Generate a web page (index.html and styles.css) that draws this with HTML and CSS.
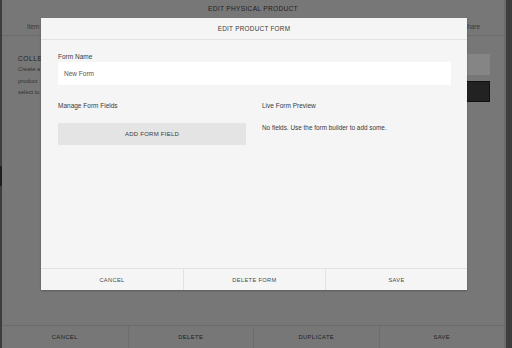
FILE: index.html
```html
<!DOCTYPE html>
<html>
<head>
<meta charset="utf-8">
<link rel="stylesheet" href="styles.css">
</head>
<body>
<div class="page">
  <div class="bg">
    <div class="bg-title">EDIT PHYSICAL PRODUCT</div>
    <div class="bg-tabs"><span>Item</span><span>Share</span></div>
    <div class="bg-content">
      <div class="bg-left">
        <div class="bg-heading">COLLECT</div>
        <p class="bg-text">Create a<br>product<br>select to</p>
      </div>
      <div class="bg-right">
        <div class="bg-box light"></div>
        <div class="bg-box dark"></div>
      </div>
    </div>
    <div class="bg-footer">
      <div class="bg-btn">CANCEL</div>
      <div class="bg-btn">DELETE</div>
      <div class="bg-btn">DUPLICATE</div>
      <div class="bg-btn">SAVE</div>
    </div>
  </div>
  <div class="edge-marks"></div>

  <div class="modal">
    <div class="modal-header">EDIT PRODUCT FORM</div>
    <div class="modal-body">
      <div class="field-label">Form Name</div>
      <div class="input">New Form</div>
      <div class="columns">
        <div class="col">
          <div class="col-title">Manage Form Fields</div>
          <div class="add-btn">ADD FORM FIELD</div>
        </div>
        <div class="col">
          <div class="col-title">Live Form Preview</div>
          <div class="empty">No fields. Use the form builder to add some.</div>
        </div>
      </div>
    </div>
    <div class="modal-footer">
      <div class="foot-btn">CANCEL</div>
      <div class="foot-btn">DELETE FORM</div>
      <div class="foot-btn">SAVE</div>
    </div>
  </div>
</div>
</body>
</html>
```

FILE: styles.css
```css
* { box-sizing: border-box; margin: 0; padding: 0; }
html, body { width: 512px; height: 348px; overflow: hidden; }
body {
  font-family: "Liberation Sans", Arial, sans-serif;
  background: #3d3d3d;
  color: #3a3a3a;
}
.page {
  position: relative;
  width: 512px;
  height: 348px;
  padding-left: 2px;
  padding-right: 6px;
}
.bg {
  height: 348px;
  background: #777;
  border-right: 2px solid #6c6c6c;
  display: flex;
  flex-direction: column;
  color: #2c2c2c;
}
.bg-title {
  height: 17px;
  line-height: 18px;
  text-align: center;
  font-size: 6.6px;
  letter-spacing: 0.3px;
  color: #222;
}
.bg-tabs {
  height: 19px;
  border-bottom: 1px solid #6c6c6c;
  display: flex;
  justify-content: space-between;
  align-items: center;
  padding: 0 24px 0 25px;
  font-size: 6.4px;
  color: #3a3a3a;
}
.bg-content {
  flex: 1;
  display: flex;
  justify-content: space-between;
  padding: 18px 14px 0 16px;
}
.bg-heading {
  font-size: 6.6px;
  letter-spacing: 0.6px;
  color: #1e1e1e;
  margin-top: 1px;
}
.bg-text {
  font-size: 5.8px;
  line-height: 11.5px;
  margin-top: 2px;
  color: #333;
}
.bg-right {
  display: flex;
  flex-direction: column;
  gap: 6px;
  width: 60px;
}
.bg-box { height: 21px; }
.bg-box.light { background: #858585; }
.bg-box.dark { background: #222; border: 1px solid #111; }
.bg-footer {
  height: 23px;
  border-top: 1px solid #6b6b6b;
  display: grid;
  grid-template-columns: repeat(4, 1fr);
}
.bg-btn {
  display: flex;
  align-items: center;
  justify-content: center;
  font-size: 5.8px;
  letter-spacing: 0.4px;
  color: #222;
  border-left: 1px solid #6d6d6d;
}
.bg-btn:first-child { border-left: none; }
.edge-marks {
  position: absolute;
  left: 0;
  top: 166px;
  width: 2px;
  height: 20px;
  background: #1e1e1e;
}

.modal {
  position: absolute;
  left: 41px;
  top: 18px;
  width: 426px;
  height: 272px;
  background: #f5f5f5;
  box-shadow: 0 1px 2px rgba(0,0,0,0.25);
  display: flex;
  flex-direction: column;
}
.modal-header {
  height: 22px;
  line-height: 21px;
  border-bottom: 1px solid #e2e2e2;
  text-align: center;
  font-size: 6.4px;
  letter-spacing: 0.25px;
  color: #3a3a3a;
}
.modal-body {
  flex: 1;
  padding: 12px 16px 0 17px;
}
.field-label {
  font-size: 6.5px;
  color: #3a3a3a;
  line-height: 9px;
}
.input {
  margin-top: 1px;
  height: 23px;
  background: #fff;
  font-size: 6.5px;
  color: #555;
  display: flex;
  align-items: center;
  padding-left: 6px;
}
.columns {
  display: grid;
  grid-template-columns: 188px 1fr;
  gap: 16px;
  margin-top: 16px;
}
.col-title {
  font-size: 6.5px;
  line-height: 9px;
  color: #3a3a3a;
}
.add-btn {
  margin-top: 13px;
  height: 22px;
  background: #e4e4e4;
  display: flex;
  align-items: center;
  justify-content: center;
  font-size: 6px;
  letter-spacing: 0.25px;
  color: #3a3a3a;
}
.empty {
  margin-top: 14px;
  font-size: 6.4px;
  color: #3a3a3a;
}
.modal-footer {
  height: 22px;
  border-top: 1px solid #e2e2e2;
  display: grid;
  grid-template-columns: repeat(3, 1fr);
}
.foot-btn {
  display: flex;
  align-items: center;
  justify-content: center;
  font-size: 5.7px;
  letter-spacing: 0.35px;
  color: #4a4a4a;
  border-left: 1px solid #e2e2e2;
}
.foot-btn:first-child { border-left: none; }
```
